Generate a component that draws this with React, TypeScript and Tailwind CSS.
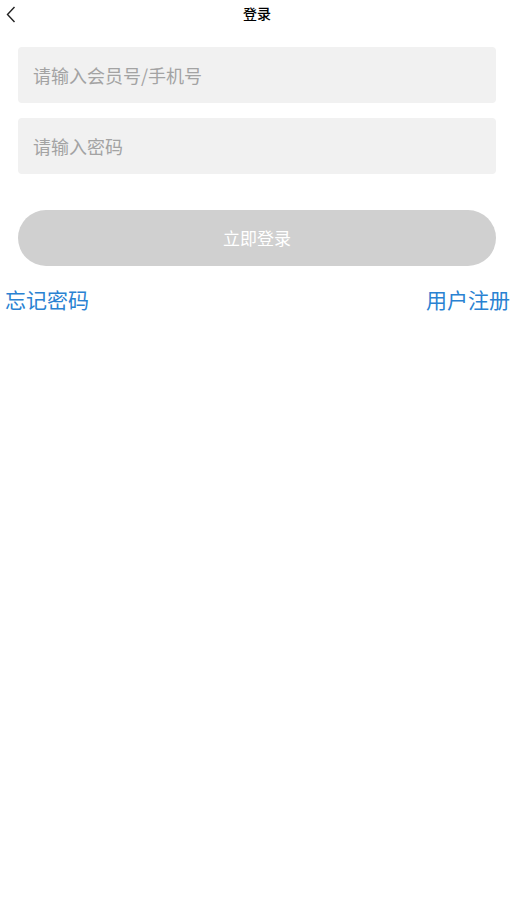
const font = { fontFamily: '"Noto Sans CJK SC", "Noto Sans", sans-serif' };

export default function App() {
  return (
    <div className="min-h-screen bg-white" style={font}>
      {/* ---- Nav bar ---- */}
      <header className="relative h-[26px] flex items-center justify-center">
        <button className="absolute left-[4px] top-[4px] w-[14px] h-[20px] flex items-center justify-center">
          <svg width="10" height="17" viewBox="0 0 10 17" fill="none">
            <path d="M8.5 1 L1.5 8.5 L8.5 16" stroke="#222" strokeWidth="1.4" />
          </svg>
        </button>
        <h1 className="text-[14px] font-medium text-black leading-none">登录</h1>
      </header>

      {/* ---- Form ---- */}
      <div className="px-[18px] pt-[21px] flex flex-col">
        <input
          className="h-[56px] rounded-[4px] bg-[#f1f1f1] px-[15px] text-[18px] text-[#333] placeholder:text-[#a3a3a3] outline-none"
          placeholder="请输入会员号/手机号"
        />
        <input
          type="password"
          className="mt-[15px] h-[56px] rounded-[4px] bg-[#f1f1f1] px-[15px] text-[18px] text-[#333] placeholder:text-[#a3a3a3] outline-none"
          placeholder="请输入密码"
        />
        <button className="mt-[36px] h-[56px] rounded-full bg-[#d0d0d0] text-white text-[17px]">
          立即登录
        </button>
      </div>

      {/* ---- Links ---- */}
      <div className="flex justify-between pl-[5px] pr-[4px] mt-[19px] text-[21px] leading-[28px] text-[#2a82d2]">
        <a>忘记密码</a>
        <a>用户注册</a>
      </div>
    </div>
  );
}
